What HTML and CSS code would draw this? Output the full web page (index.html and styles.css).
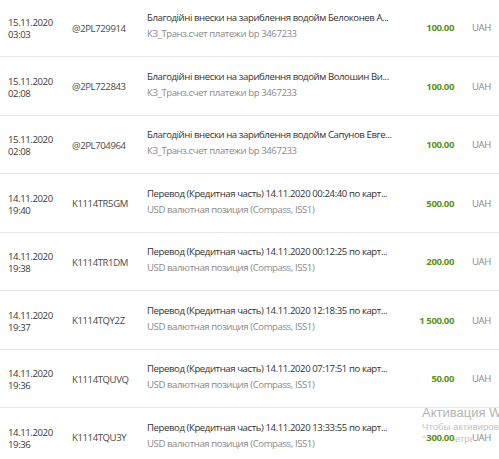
FILE: index.html
```html
<!DOCTYPE html>
<html>
<head>
<meta charset="utf-8">
<link rel="stylesheet" href="styles.css">
</head>
<body>
<div class="list">
  <div class="row">
    <div class="date">15.11.2020<br>03:03</div>
    <div class="ref">@2PL729914</div>
    <div class="desc"><div class="d1">Благодійні внески на зариблення водойм Белоконев А...</div><div class="d2">КЗ_Транз.счет платежи bp 3467233</div></div>
    <div class="amt">100.00</div>
    <div class="cur">UAH</div>
  </div>
  <div class="row">
    <div class="date">15.11.2020<br>02:08</div>
    <div class="ref">@2PL722843</div>
    <div class="desc"><div class="d1">Благодійні внески на зариблення водойм Волошин Ви...</div><div class="d2">КЗ_Транз.счет платежи bp 3467233</div></div>
    <div class="amt">100.00</div>
    <div class="cur">UAH</div>
  </div>
  <div class="row">
    <div class="date">15.11.2020<br>02:08</div>
    <div class="ref">@2PL704964</div>
    <div class="desc"><div class="d1">Благодійні внески на зариблення водойм Сапунов Евге...</div><div class="d2">КЗ_Транз.счет платежи bp 3467233</div></div>
    <div class="amt">100.00</div>
    <div class="cur">UAH</div>
  </div>
  <div class="row">
    <div class="date">14.11.2020<br>19:40</div>
    <div class="ref">K1114TR5GM</div>
    <div class="desc"><div class="d1">Перевод (Кредитная часть) 14.11.2020 00:24:40 по карт...</div><div class="d2">USD валютная позиция (Compass, ISS1)</div></div>
    <div class="amt">500.00</div>
    <div class="cur">UAH</div>
  </div>
  <div class="row">
    <div class="date">14.11.2020<br>19:38</div>
    <div class="ref">K1114TR1DM</div>
    <div class="desc"><div class="d1">Перевод (Кредитная часть) 14.11.2020 00:12:25 по карт...</div><div class="d2">USD валютная позиция (Compass, ISS1)</div></div>
    <div class="amt">200.00</div>
    <div class="cur">UAH</div>
  </div>
  <div class="row">
    <div class="date">14.11.2020<br>19:37</div>
    <div class="ref">K1114TQY2Z</div>
    <div class="desc"><div class="d1">Перевод (Кредитная часть) 14.11.2020 12:18:35 по карт...</div><div class="d2">USD валютная позиция (Compass, ISS1)</div></div>
    <div class="amt">1 500.00</div>
    <div class="cur">UAH</div>
  </div>
  <div class="row">
    <div class="date">14.11.2020<br>19:36</div>
    <div class="ref">K1114TQUVQ</div>
    <div class="desc"><div class="d1">Перевод (Кредитная часть) 14.11.2020 07:17:51 по карт...</div><div class="d2">USD валютная позиция (Compass, ISS1)</div></div>
    <div class="amt">50.00</div>
    <div class="cur">UAH</div>
  </div>
  <div class="row">
    <div class="date">14.11.2020<br>19:36</div>
    <div class="ref">K1114TQU3Y</div>
    <div class="desc"><div class="d1">Перевод (Кредитная часть) 14.11.2020 13:33:55 по карт...</div><div class="d2">USD валютная позиция (Compass, ISS1)</div></div>
    <div class="amt"><span class="mask">300.00</span></div>
    <div class="cur"><span class="mask">UAH</span></div>
  </div>
</div>
<div class="watermark">
  <div class="wm1">Активация Windows</div>
  <div class="wm2">Чтобы активировать Windows, перейдите в раздел<br>"Параметры".</div>
</div>
</body>
</html>
```
FILE: styles.css
```css
html, body {
  margin: 0;
  padding: 0;
  background: #fff;
  overflow: hidden;
}
body {
  width: 499px;
  height: 459px;
  font-family: "Open Sans", "Noto Sans", sans-serif;
  font-size: 9.6px;
  letter-spacing: -0.42px;
  color: #333;
  position: relative;
}
.list {
  margin-top: -1.5px;
  position: relative;
  z-index: 1;
}
.row {
  display: grid;
  grid-template-columns: 64px 75px 245px 62px 18px auto;
  grid-template-areas: "date ref desc amt gap cur";
  align-items: center;
  height: 58.5px;
  box-sizing: border-box;
  padding-left: 8px;
  border-bottom: 1px solid #e6e6e6;
}
.date {
  grid-area: date;
  line-height: 11.8px;
  color: #3a3a3a;
  padding-top: 4px;
}
.ref {
  grid-area: ref;
  color: #4a4a4a;
  padding-top: 2px;
}
.desc {
  grid-area: desc;
  overflow: hidden;
  white-space: nowrap;
  margin-top: -2px;
}
.d1 {
  color: #333;
  line-height: 16px;
}
.d2 {
  color: #8a8a8a;
  line-height: 16px;
}
.amt {
  grid-area: amt;
  text-align: right;
  font-weight: 700;
  color: #5a9419;
  padding-top: 1px;
}
.cur {
  grid-area: cur;
  color: #888;
  padding-top: 1px;
}
.mask {
  background: #fff;
}
.watermark {
  position: absolute;
  left: 422px;
  top: 404px;
  white-space: nowrap;
  color: #b4b4b4;
  font-family: "Liberation Sans", "Noto Sans", sans-serif;
  letter-spacing: 0;
  z-index: 0;
}
.wm1 {
  font-size: 13px;
  line-height: 17px;
}
.wm2 {
  font-size: 9.6px;
  line-height: 11.5px;
  color: #c4c4c4;
}
```
